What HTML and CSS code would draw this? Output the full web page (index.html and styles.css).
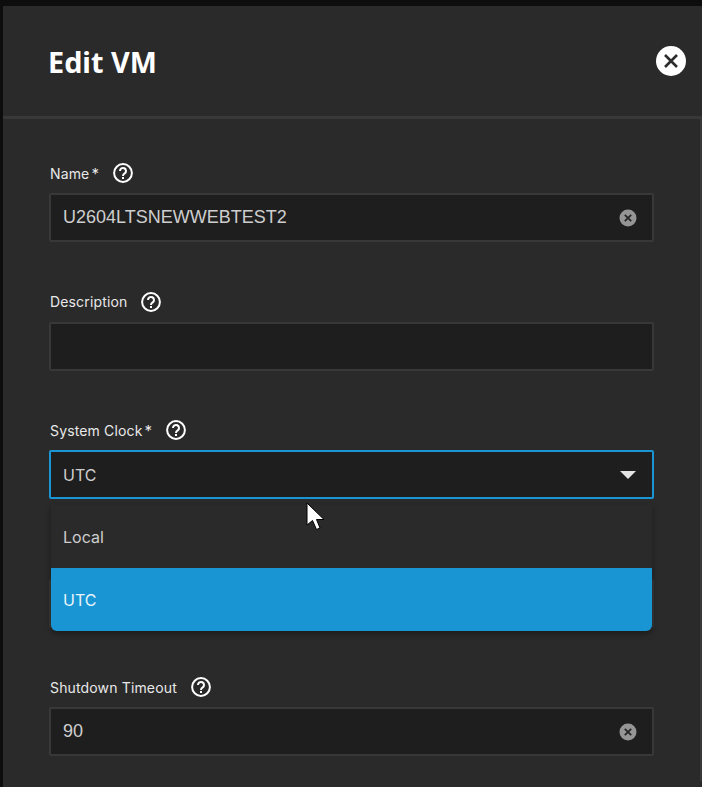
FILE: index.html
```html
<!DOCTYPE html>
<html lang="en">
<head>
    <meta charset="UTF-8">
    <meta name="viewport" content="width=device-width, initial-scale=1.0">
    <title>Edit VM</title>
    <link rel="stylesheet" href="styles.css">
</head>
<body>
    <div class="panel">
        <header class="header">
            <h1 class="title">Edit VM</h1>
            <button class="close" type="button" aria-label="Close">
                <svg width="30" height="30" viewBox="0 0 30 30">
                    <circle cx="15" cy="15" r="15" fill="#fff"/>
                    <path d="M9 9 L21 21 M21 9 L9 21" stroke="#2b2b2b" stroke-width="2.6" fill="none"/>
                </svg>
            </button>
        </header>
        <div class="content">
            <form class="form">
                <div class="field">
                    <div class="label">
                        <span>Name</span><span class="req">*</span>
                        <svg class="help" viewBox="0 0 20 20">
                            <circle cx="10" cy="10" r="8.9" fill="none" stroke="#fff" stroke-width="2"/>
                            <path d="M7 8 a3 3 0 1 1 4.7 2.4 c-1.2 .8 -1.7 1.3 -1.7 2.6" fill="none" stroke="#fff" stroke-width="2"/>
                            <rect x="9" y="14" width="2" height="2" fill="#fff"/>
                        </svg>
                    </div>
                    <div class="input">
                        <span class="value">U2604LTSNEWWEBTEST2</span>
                        <svg class="clear" viewBox="0 0 18 18">
                            <circle cx="9" cy="9" r="8.5" fill="#959595"/>
                            <path d="M5.8 5.8 L12.2 12.2 M12.2 5.8 L5.8 12.2" stroke="#262626" stroke-width="1.8" fill="none"/>
                        </svg>
                    </div>
                </div>
                <div class="field">
                    <div class="label">
                        <span>Description</span>
                        <svg class="help" viewBox="0 0 20 20">
                            <circle cx="10" cy="10" r="8.9" fill="none" stroke="#fff" stroke-width="2"/>
                            <path d="M7 8 a3 3 0 1 1 4.7 2.4 c-1.2 .8 -1.7 1.3 -1.7 2.6" fill="none" stroke="#fff" stroke-width="2"/>
                            <rect x="9" y="14" width="2" height="2" fill="#fff"/>
                        </svg>
                    </div>
                    <div class="input"></div>
                </div>
                <div class="field field-select">
                    <div class="label">
                        <span>System Clock</span><span class="req">*</span>
                        <svg class="help" viewBox="0 0 20 20">
                            <circle cx="10" cy="10" r="8.9" fill="none" stroke="#fff" stroke-width="2"/>
                            <path d="M7 8 a3 3 0 1 1 4.7 2.4 c-1.2 .8 -1.7 1.3 -1.7 2.6" fill="none" stroke="#fff" stroke-width="2"/>
                            <rect x="9" y="14" width="2" height="2" fill="#fff"/>
                        </svg>
                    </div>
                    <div class="input input-focus">
                        <span class="value value-select">UTC</span>
                        <span class="arrow"></span>
                    </div>
                    <div class="dropdown">
                        <div class="option">Local</div>
                        <div class="option selected">UTC</div>
                    </div>
                </div>
                <!-- covered by the open dropdown -->
                <div class="field">
                    <div class="label"></div>
                    <div class="input"></div>
                </div>
                <div class="field">
                    <div class="label">
                        <span>Shutdown Timeout</span>
                        <svg class="help" viewBox="0 0 20 20">
                            <circle cx="10" cy="10" r="8.9" fill="none" stroke="#fff" stroke-width="2"/>
                            <path d="M7 8 a3 3 0 1 1 4.7 2.4 c-1.2 .8 -1.7 1.3 -1.7 2.6" fill="none" stroke="#fff" stroke-width="2"/>
                            <rect x="9" y="14" width="2" height="2" fill="#fff"/>
                        </svg>
                    </div>
                    <div class="input">
                        <span class="value">90</span>
                        <svg class="clear" viewBox="0 0 18 18">
                            <circle cx="9" cy="9" r="8.5" fill="#959595"/>
                            <path d="M5.8 5.8 L12.2 12.2 M12.2 5.8 L5.8 12.2" stroke="#262626" stroke-width="1.8" fill="none"/>
                        </svg>
                    </div>
                </div>
            </form>
            <div class="scrollbar"></div>
        </div>
        <svg class="cursor" width="19" height="29" viewBox="0 0 19 29">
            <path d="M1 1 L1 23 L6.5 18.5 L10.5 27.5 L14 26 L10.5 17.5 L18 17.5 Z" fill="#fff" stroke="#000" stroke-width="1"/>
        </svg>
    </div>
</body>
</html>
```

FILE: styles.css
```css
* {
    box-sizing: border-box;
}

html, body {
    height: 100%;
}

body {
    margin: 0;
    padding: 6px 0 0 3px;
    background-color: #0d0d0d;
    overflow: hidden;
    font-family: "Inter", "Liberation Sans", sans-serif;
}

.panel {
    position: relative;
    height: 781px;
    overflow: hidden;
    background-color: #2a2a2a;
}

.header {
    display: flex;
    align-items: center;
    justify-content: space-between;
    height: 113px;
    padding: 0 16px 0 45px;
    border-bottom: 3px solid #383838;
}

.title {
    margin: 0;
    font-family: "Noto Sans", sans-serif;
    font-size: 28.8px;
    font-weight: 700;
    color: #fff;
}

.close {
    display: flex;
    padding: 0;
    border: none;
    background: none;
}

.content {
    display: flex;
    justify-content: space-between;
}

.form {
    width: 605px;
    margin-left: 46px;
    padding-top: 42px;
}

.field {
    position: relative;
    margin-bottom: 47.5px;
}

.label {
    display: flex;
    align-items: center;
    height: 24px;
    margin-bottom: 8px;
    padding-left: 1px;
    font-size: 14px;
    letter-spacing: 0.15px;
    color: #e8e8e8;
}

.req {
    margin-left: 2px;
    font-size: 15px;
}

.help {
    width: 20px;
    height: 20px;
    margin-left: 14px;
}

.input {
    display: flex;
    align-items: center;
    justify-content: space-between;
    height: 49px;
    padding: 0 15px 0 12px;
    background-color: #1e1e1e;
    border: 2px solid #383838;
    border-radius: 2px;
}

.input-focus {
    border-color: #1a95d3;
    padding-right: 17px;
}

.value {
    font-family: "Liberation Sans", sans-serif;
    font-size: 18px;
    color: #cecece;
}

.value-select {
    font-family: "Inter", sans-serif;
    font-size: 16px;
}

.clear {
    width: 18px;
    height: 18px;
}

.arrow {
    width: 0;
    height: 0;
    margin-right: -1px;
    border-left: 8px solid transparent;
    border-right: 8px solid transparent;
    border-top: 8px solid #e4e4e4;
}

.dropdown {
    position: absolute;
    left: 2px;
    right: 2px;
    top: 87px;
    z-index: 2;
    background-color: #2a2a2a;
    border-radius: 0 0 6px 6px;
    box-shadow: 0 3px 6px rgba(0, 0, 0, 0.35);
    overflow: hidden;
}

.option {
    display: flex;
    align-items: center;
    height: 63px;
    padding-left: 12px;
    font-size: 16px;
    color: #cecece;
}

.selected {
    background-color: #1a95d3;
    color: #e8f4fa;
}

.scrollbar {
    width: 2px;
    height: 662px;
    background-color: #383838;
}

.cursor {
    position: absolute;
    left: 303px;
    top: 496px;
    z-index: 3;
}
```
